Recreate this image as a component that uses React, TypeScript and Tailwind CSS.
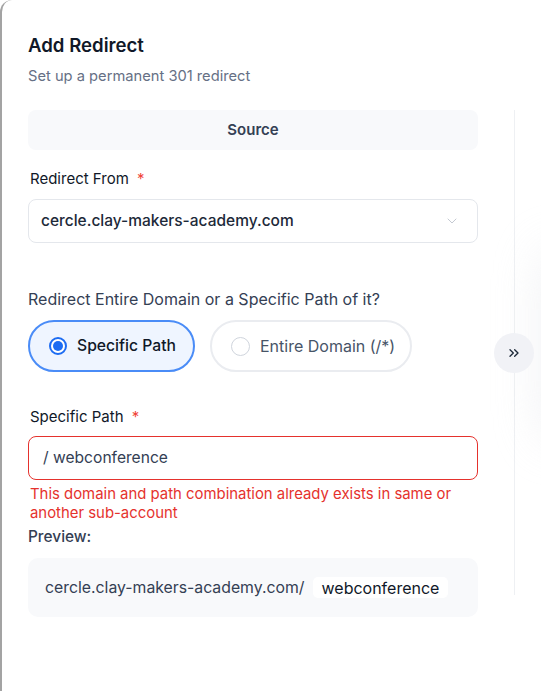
import { ChevronDown, ChevronsRight } from "lucide-react";

export default function App() {
  return (
    <div
      className="w-[541px] h-[691px] bg-white overflow-hidden"
      style={{ fontFamily: "Inter, 'Noto Sans', sans-serif" }}
    >
      <div className="relative h-full border-l-2 border-[#a3a3a3] rounded-tl-[12px] bg-white flex">
        {/* form column */}
        <div className="w-[511px] shrink-0 pl-[26px] pr-[35px]">
          <div className="pt-[33px]">
            <h2 className="text-[18.6px] leading-[24px] font-semibold text-[#101828]">Add Redirect</h2>
            <p className="mt-[9px] text-[14.7px] leading-[20px] text-[#667085]">
              Set up a permanent 301 redirect
            </p>
          </div>

          <div className="mt-[24px] h-[40px] rounded-[8px] bg-[#f8f9fb] flex items-center justify-center">
            <span className="text-[15px] font-semibold text-[#344054]">Source</span>
          </div>

          <label className="mt-[19px] block text-[15px] leading-[20px] text-[#101828] pl-[2px]">
            Redirect From <span className="ml-[4px] text-[#f04438]">*</span>
          </label>
          <div className="mt-[10px] h-[44px] rounded-[8px] border border-[#e4e7ec] flex items-center justify-between pl-[12px] pr-[17px]">
            <span className="text-[15.5px] font-medium text-[#1d2939]">cercle.clay-makers-academy.com</span>
            <ChevronDown className="w-[16px] h-[16px] text-[#c4c9d2]" strokeWidth={1.5} />
          </div>

          <p className="mt-[46px] text-[16px] leading-[20px] text-[#344054]">
            Redirect Entire Domain or a Specific Path of it?
          </p>
          <div className="mt-[11px] flex gap-[15px]">
            <div className="h-[52px] w-[167px] rounded-full border-2 border-[#4a8cf7] bg-[#eff5ff] flex items-center pl-[19px] gap-[10px]">
              <span className="w-[18px] h-[18px] rounded-full border-2 border-[#1d6cf2] bg-white flex items-center justify-center">
                <span className="w-[10px] h-[10px] rounded-full bg-[#1d6cf2]" />
              </span>
              <span className="text-[15.7px] font-medium text-[#101828]">Specific Path</span>
            </div>
            <div className="h-[52px] w-[202px] rounded-full border-2 border-[#eaecf0] bg-white flex items-center pl-[19px] gap-[10px]">
              <span className="w-[19px] h-[19px] rounded-full border border-[#d0d5dd] bg-white" />
              <span className="text-[16px] text-[#475467]">Entire Domain (/*)</span>
            </div>
          </div>

          <label className="mt-[35px] block text-[15px] leading-[20px] text-[#101828] pl-[2px]">
            Specific Path <span className="ml-[4px] text-[#f04438]">*</span>
          </label>
          <div className="mt-[9px] h-[44px] rounded-[8px] border border-[#e5322d] flex items-center pl-[14px]">
            <span className="text-[15.6px] text-[#344054]">/ webconference</span>
          </div>
          <p className="mt-[5px] pl-[2px] text-[14.9px] leading-[19px] text-[#e5322d]">
            This domain and path combination already exists in same or another sub-account
          </p>
          <p className="mt-[4px] text-[15.4px] leading-[20px] font-medium text-[#344054]">Preview:</p>

          <div className="mt-[11px] h-[59px] rounded-[10px] bg-[#f8f9fb] flex items-center pl-[17px]">
            <span className="text-[15.8px] text-[#344054]">cercle.clay-makers-academy.com/</span>
            <span className="ml-[8px] h-[21px] px-[9px] rounded-[5px] bg-white flex items-center text-[16px] text-[#101828]">
              webconference
            </span>
          </div>
        </div>

        {/* divider column with collapse button */}
        <div className="relative w-[28px] shrink-0">
          <div className="absolute left-[1px] top-[110px] h-[485px] w-px bg-[#eef0f3]" />
          <div className="absolute left-[30px] top-[250px] h-[190px] w-[40px] rounded-full bg-[#e5e7eb] blur-xl opacity-60" />
          <button className="absolute left-[-19px] top-[333px] w-[40px] h-[40px] rounded-full bg-[#f1f2f6] flex items-center justify-center">
            <ChevronsRight className="w-[16px] h-[16px] text-[#1d2939]" strokeWidth={2} />
          </button>
        </div>
      </div>
    </div>
  );
}
